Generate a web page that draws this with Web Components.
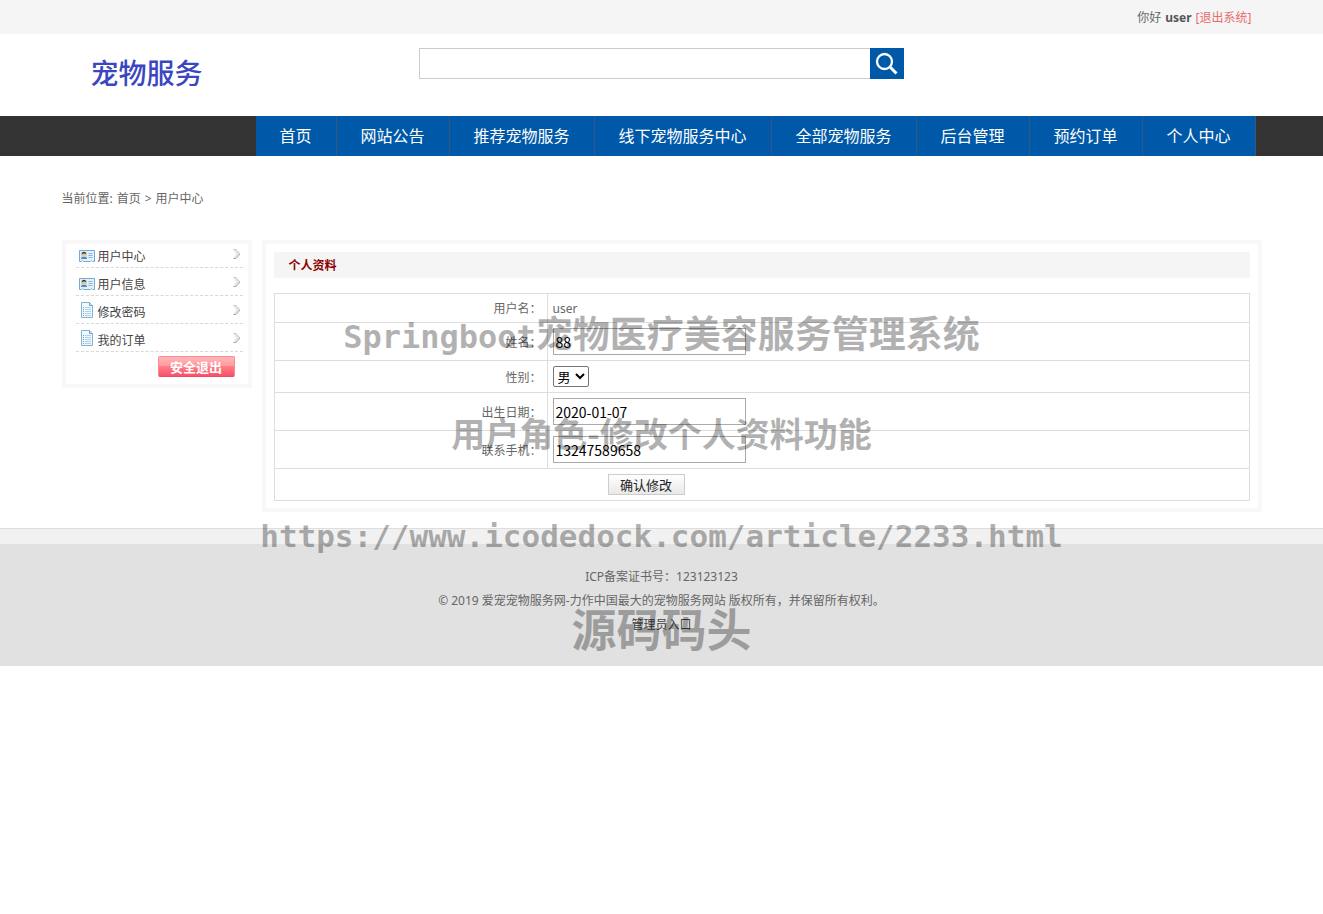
<!DOCTYPE html>
<html lang="zh-CN">
<head>
<meta charset="utf-8">
<meta name="viewport" content="width=device-width, initial-scale=1">
<title>宠物服务 - 用户中心</title>
<style>
html, body { margin: 0; }
body { background: #fff; color: #666; font: 12px/24px "Noto Sans", "Noto Sans CJK SC", sans-serif; }
</style>
</head>
<body>
<pet-page>
  <pet-topbar user="user"></pet-topbar>
  <pet-header>宠物服务</pet-header>
  <pet-nav>
    <pet-nav-item>首页</pet-nav-item>
    <pet-nav-item>网站公告</pet-nav-item>
    <pet-nav-item>推荐宠物服务</pet-nav-item>
    <pet-nav-item>线下宠物服务中心</pet-nav-item>
    <pet-nav-item>全部宠物服务</pet-nav-item>
    <pet-nav-item>后台管理</pet-nav-item>
    <pet-nav-item>预约订单</pet-nav-item>
    <pet-nav-item>个人中心</pet-nav-item>
  </pet-nav>
  <pet-crumbs></pet-crumbs>
  <pet-columns>
    <pet-sidebar slot="side">
      <pet-side-item icon="card">用户中心</pet-side-item>
      <pet-side-item icon="card">用户信息</pet-side-item>
      <pet-side-item icon="doc">修改密码</pet-side-item>
      <pet-side-item icon="doc">我的订单</pet-side-item>
    </pet-sidebar>
    <pet-panel heading="个人资料"><pet-profile></pet-profile></pet-panel>
  </pet-columns>
  <pet-footer></pet-footer>
  <pet-watermark slot="over"></pet-watermark>
</pet-page>

<script>
function define(name, render) {
  customElements.define(name, class extends HTMLElement {
    constructor() {
      super();
      this.attachShadow({ mode: 'open' });
    }
    connectedCallback() {
      const t = document.createElement('template');
      t.innerHTML = '<style>:host{display:block}*{box-sizing:border-box}a{color:inherit;text-decoration:none}.wrap{width:100%;max-width:1200px;margin:0 auto}</style>' + render(this);
      this.shadowRoot.replaceChildren(t.content.cloneNode(true));
    }
  });
}

define('pet-page', () => `
  <style>:host{position:relative}</style>
  <slot></slot><slot name="over"></slot>`);

define('pet-topbar', el => `
  <style>
    :host{background:#f5f5f5}
    .wrap{display:flex;justify-content:flex-end;gap:4px;height:34px;line-height:36px;padding-right:10px}
    b{color:#555} a{color:#e96a6a}
  </style>
  <div class="wrap"><span>你好</span><b>${el.getAttribute('user')}</b><a href="#">[退出系统]</a></div>`);

define('pet-header', () => `
  <style>
    .wrap{display:grid;grid-template-columns:1fr auto 1fr;height:82px}
    .logo{padding-left:29px;font-size:28px;font-weight:500;line-height:78px;color:#3a47c0}
    form{display:flex;height:31px;margin-top:14px}
    input{width:451px;border:1px solid #ccc;border-right:0;padding:0 8px;font:inherit;font-size:14px;outline:0;border-radius:0}
    button{width:34px;border:0;padding:0;background:#0058a8;display:grid;place-items:center}
  </style>
  <div class="wrap">
    <a class="logo" href="#"><slot></slot></a>
    <form><input type="search" aria-label="搜索"><button type="button" aria-label="搜索"><svg width="24" height="24" viewBox="0 0 24 24" fill="none" stroke="#fff"><circle cx="9.500" cy="9.500" r="7.500" stroke-width="2.300"/><path d="M15 15L21.500 21.500" stroke-width="3"/></svg></button></form>
  </div>`);

define('pet-nav', () => `
  <style>
    :host{background:#333}
    nav{display:flex;height:40px;padding-left:194px}
  </style>
  <nav class="wrap"><slot></slot></nav>`);

define('pet-nav-item', () => `
  <style>
    :host{background:#0058a8;border-right:1px solid #35587c;box-sizing:border-box}
    a{display:block;padding:0 24px;font-size:16px;line-height:40px;color:#fff;white-space:nowrap}
  </style>
  <a href="#"><slot></slot></a>`);

define('pet-crumbs', () => `
  <style>nav{display:flex;gap:4px;height:84px;line-height:86px}</style>
  <nav class="wrap"><span>当前位置:</span><a href="#">首页</a><span>&gt;</span><span>用户中心</span></nav>`);

define('pet-columns', () => `
  <style>.wrap{display:grid;grid-template-columns:190px 1fr;gap:10px;align-items:start}</style>
  <div class="wrap"><slot name="side"></slot><slot></slot></div>`);

define('pet-sidebar', () => `
  <style>
    :host{border:4px solid #f8f8f8}
    .list{display:grid;gap:4px;padding:0 5px 0 10px}
    .out{display:flex;justify-content:flex-end;padding:4px 13px 7px}
    button{width:77px;height:21px;padding:0;border:1px solid #fb8a98;border-bottom-color:#f04c66;border-radius:2px;background:linear-gradient(#ffb8b8,#ff9a9f 45%,#ff7d88 50%,#fb5068);color:#fff;font:700 13px/18px "Noto Sans CJK SC",sans-serif}
  </style>
  <div class="list"><slot></slot></div>
  <div class="out"><button type="button">安全退出</button></div>`);

const icons = {
  card: `<svg width="16" height="16" viewBox="0 0 16 16"><path d="M.5 2.5h15v11h-2l-1-1-1 1h-7l-1-1-1 1h-2z" fill="#e2f1fb" stroke="#79a9cf"/><path d="M2 4h6v7H2z" fill="#bcdcf2"/><circle cx="5" cy="6.500" r="2" fill="#f0c48c"/><path d="M2.800 6.500c-.3-3.600 4.700-3.600 4.400 0l-1-1h-2z" fill="#3a2f2a"/><path d="M2 11c0-3 6-3 6 0z" fill="#5a87ae"/><path d="M9.500 5.500h4M9.500 7.500h4M9.500 9.500h4" stroke="#8bb8d8"/></svg>`,
  doc: `<svg width="16" height="16" viewBox="0 0 16 16"><path d="M2.500.5h8l3 3v12h-11z" fill="#eff8fe" stroke="#86b2d2"/><path d="M10.500.5v3h3" fill="#bddcf0" stroke="#72a3c7"/><path d="M6 5.500h6M6 7.500h6M6 9.500h6M6 11.500h6M6 13.500h6" stroke="#b4d0e3"/><path d="M4 5.500h1M4 7.500h1M4 9.500h1M4 11.500h1M4 13.500h1" stroke="#6d9fae"/></svg>`
};

define('pet-side-item', el => `
  <style>
    a{display:flex;align-items:center;gap:3px;height:24px;padding:0 2px;border-bottom:1px dashed #d8d8d8;color:#444}
    a>*{flex:none}
    .icon{display:flex;padding-left:1px}
    .doc{padding-bottom:3px}
    .text{padding-top:2px;line-height:22px}
    .go{margin-left:auto;padding-bottom:4px;display:flex}
  </style>
  <a href="#"><span class="icon ${el.getAttribute('icon')}">${icons[el.getAttribute('icon')]}</span><span class="text"><slot></slot></span><span class="go"><svg width="9" height="12" viewBox="0 0 9 12"><path d="M1 1.500h3l4 4.500-4 4.500H1L4.500 6z" fill="#e6e6e6"/><path d="M1.500 1.500h2.500l4 4.500" fill="none" stroke="#c8c8c8"/><path d="M8 6l-4 4.500H1.500" fill="none" stroke="#a8a8a8"/></svg></span></a>`);

define('pet-panel', el => `
  <style>
    :host{border:4px solid #f8f8f8;padding:8px 8px 7px}
    h2{margin:0 0 15px;padding-left:15px;height:26px;background:#f5f5f5;font-size:12px;line-height:28px;color:#8b0000}
  </style>
  <h2>${el.getAttribute('heading')}</h2><slot></slot>`);

define('pet-profile', () => `
  <style>
    form{margin:0}
    table{width:100%;border-collapse:collapse;table-layout:fixed}
    col.k{width:28%}
    th,td{border:1px solid #ddd;padding:5px;line-height:18px;font-weight:400;text-align:left;vertical-align:middle}
    th,.plain td{padding:6px 5px 4px}
    th{text-align:right}
    .plain th,.plain td{height:29px}
    input,select,button{display:block;margin:0;color:#000;font:14px "Noto Sans CJK SC",sans-serif}
    input{width:193px;height:27px;padding:0 2px;border:1px solid #aaa;border-radius:0}
    select{width:36px;height:21px;padding:0;border:1px solid #767676;border-radius:2px;background:#fff;font-family:"Noto Sans","Noto Sans CJK SC",sans-serif;font-size:13px;line-height:16px}
    td.act{padding-left:333px}
    button{width:77px;height:21px;padding:0;border:1px solid #ccc;background:linear-gradient(#fff,#e8e8e8);color:#222;font-size:13px;line-height:18px}
  </style>
  <form><table>
    <colgroup><col class="k"><col></colgroup>
    <tr class="plain"><th scope="row">用户名：</th><td>user</td></tr>
    <tr><th scope="row"><label for="name">姓名：</label></th><td><input id="name" value="88"></td></tr>
    <tr><th scope="row"><label for="sex">性别：</label></th><td><select id="sex"><option>男</option><option>女</option></select></td></tr>
    <tr><th scope="row"><label for="birth">出生日期：</label></th><td><input id="birth" value="2020-01-07"></td></tr>
    <tr><th scope="row"><label for="phone">联系手机：</label></th><td><input id="phone" type="tel" value="13247589658"></td></tr>
    <tr><td class="act" colspan="2"><button type="button">确认修改</button></td></tr>
  </table></form>`);

define('pet-footer', () => `
  <style>
    :host{margin-top:16px;border-top:1px solid #ddd;background:#f1f1f1;padding-top:15px}
    footer{background:#e1e1e1;padding:21px 20px 29px;text-align:center}
    p{margin:0} a{color:#444}
  </style>
  <footer>
    <p>ICP备案证书号：123123123</p>
    <p>© 2019 爱宠宠物服务网-力作中国最大的宠物服务网站 版权所有，并保留所有权利。</p>
    <p><a href="#">管理员入口</a></p>
  </footer>`);

define('pet-watermark', () => `
  <style>
    :host{position:absolute;top:0;left:0;right:0;padding-top:282px;pointer-events:none;color:#000;opacity:.3;text-align:center;font-weight:700;font-family:"Noto Sans CJK SC",sans-serif;white-space:nowrap;overflow:hidden}
    .mono{font-family:"DejaVu Sans Mono",monospace}
    .a{font-size:37px;line-height:100px}
    .a .mono{font-size:32px;line-height:1}
    .b{font-size:34px;line-height:102px}
    .c{font-size:31px;line-height:104px}
    .d{font-size:45px;line-height:80px}
  </style>
  <div class="a"><span class="mono">Springboot</span>宠物医疗美容服务管理系统</div>
  <div class="b">用户角色-修改个人资料功能</div>
  <div class="c mono">https://www.icodedock.com/article/2233.html</div>
  <div class="d">源码码头</div>`);
</script>
</body>
</html>
